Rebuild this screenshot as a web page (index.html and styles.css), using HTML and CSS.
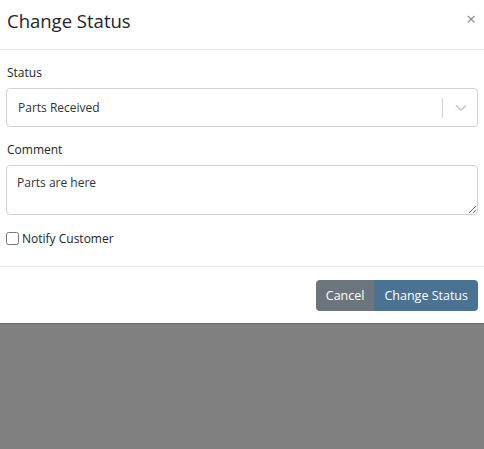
FILE: index.html
```html
<!doctype html>
<html>
<head>
	<meta charset="utf-8" />
	<title>Change Status</title>
	<link rel="stylesheet" href="styles.css">
</head>
<body>
	<div class="modal">
		<div class="modal-header">
			<h5 class="modal-title">Change Status</h5>
			<span class="close">&times;</span>
		</div>
		<div class="modal-body">
			<label class="field-label">Status</label>
			<div class="select">
				<span class="select-value">Parts Received</span>
				<span class="select-sep"></span>
				<svg class="select-arrow" width="12" height="8" viewBox="0 0 12 8"><path d="M1 1.5 L6 6 L11 1.5" fill="none" stroke="#c4c4c4" stroke-width="1.6"/></svg>
			</div>
			<label class="field-label">Comment</label>
			<textarea class="comment">Parts are here</textarea>
			<label class="check"><input type="checkbox" /> Notify Customer</label>
		</div>
		<div class="modal-footer">
			<div class="btn-group">
				<button class="btn btn-cancel">Cancel</button>
				<button class="btn btn-primary">Change Status</button>
			</div>
		</div>
	</div>
	<div class="backdrop"></div>
</body>
</html>
```
FILE: styles.css
```css
html, body { margin: 0; padding: 0; height: 100%; }
body { font-family: 'Open Sans', 'Noto Sans', sans-serif; color: #212529; background: #808080; }
.modal { background: #fff; border-bottom: 1px solid #6a6a6a; }
.modal-header { height: 49px; border-bottom: 1px solid #e3e6e9; display: flex; align-items: center; justify-content: space-between; padding: 0 7px; }
.modal-title { margin: 0 0 6px 0; font-size: 18.5px; font-weight: 500; line-height: 1; }
.close { color: #8a8a8a; font-size: 17px; margin-right: 1px; margin-top: -12px; }
.modal-body { padding: 14px 6px 6px 6px; }
.field-label { display: block; font-size: 12px; margin: 0 0 7px 1px; }
.select { height: 37px; border: 1px solid #cfd3d7; border-radius: 4px; display: flex; align-items: center; padding: 0 10px 0 11px; margin-bottom: 14px; }
.select-value { flex: 1; font-size: 12px; color: #333; }
.select-sep { width: 1px; height: 20px; background: #cfd3d7; margin-right: 12px; }
.select-arrow { display: block; }
.comment { display: block; box-sizing: border-box; width: 100%; height: 50px; border: 1px solid #cfd3d7; border-radius: 4px; padding: 8px 10px; font-family: inherit; font-size: 12px; color: #333; margin: 0 0 15px 0; resize: vertical; }
.check { display: flex; align-items: center; font-size: 12px; margin-bottom: 13px; }
.check input { margin: 0 3px 0 0; width: 13px; height: 13px; }
.modal-footer { border-top: 1px solid #e3e6e9; height: 56px; display: flex; justify-content: flex-end; align-items: center; padding: 0 6px; }
.btn-group { display: flex; }
.btn { border: none; color: #fff; font-family: inherit; font-size: 12.5px; height: 31px; padding: 0 10px; }
.btn-cancel { background: #6c757d; border-radius: 4px 0 0 4px; }
.btn-primary { background: #4a7293; border-radius: 0 4px 4px 0; }
```
